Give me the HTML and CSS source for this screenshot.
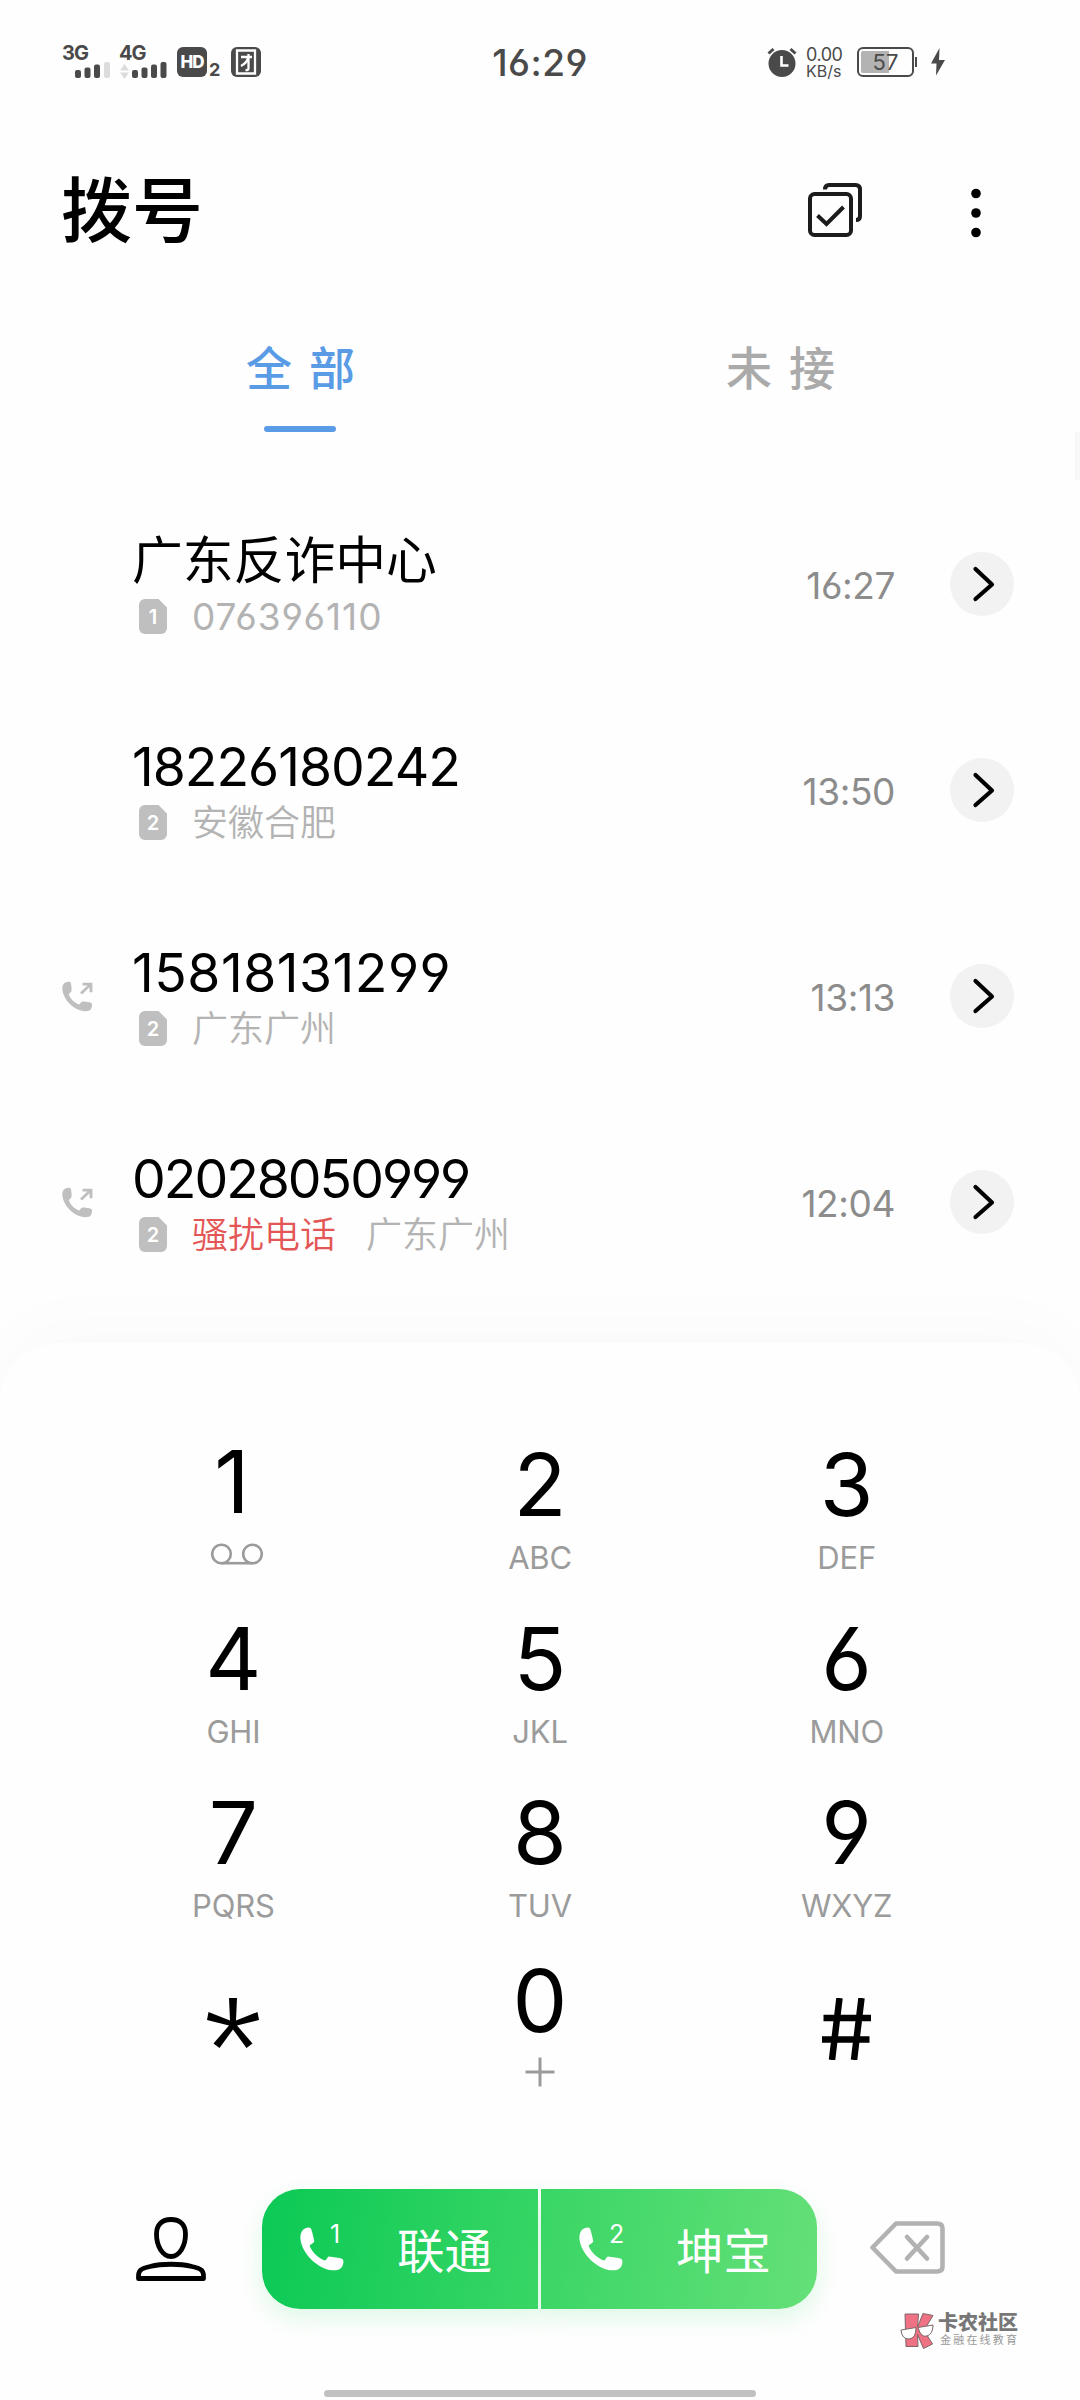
FILE: index.html
```html
<!DOCTYPE html>
<html lang="zh-CN">
<head>
    <meta charset="UTF-8">
    <meta name="viewport" content="width=device-width, initial-scale=1.0">
    <title>拨号</title>
    <link rel="stylesheet" href="styles.css">
</head>
<body>
    <!-- shared icons -->
    <svg class="defs" width="0" height="0">
        <symbol id="sim" viewBox="0 0 28 35">
            <path d="M6 0h13.500L28 8.500V29a6 6 0 0 1-6 6H6a6 6 0 0 1-6-6V6a6 6 0 0 1 6-6z" fill="#bfbfbf"/>
        </symbol>
        <symbol id="arrow" viewBox="0 0 64 64">
            <path d="M25.500 17L42 32.500 25.500 47" fill="none" stroke="#000" stroke-width="4.200" stroke-linecap="round" stroke-linejoin="round"/>
        </symbol>
        <symbol id="handset" viewBox="0 0 44 44">
            <path d="M5 1.500C7.500.300 10 .300 10.800 1.200C11.800 3 13.800 11 14.300 14.300C14 16 11 17 9.600 18.600C11 24 18 31.500 25 33.600C27 33 27 30 29 29.600C33 30 39 30.800 42.500 32C44 33.500 43.500 37 42 40C40 43 36 43.600 32 43.300C18 42 2.500 27 .600 13C0 8 1 3.500 5 1.500z" fill="currentColor"/>
        </symbol>
        <symbol id="outgoing" viewBox="0 0 31 31">
            <path d="M3.500 1.500C5.500.500 8.200.500 8.700 1.500C9.300 4 9.800 7 9.600 9.500C9.300 11.500 7.300 12 6.800 13.200C8.200 17.500 12.500 21.800 17 23.600C18.500 23.300 18.500 21.200 20.300 20.600C23.500 20.600 27 21.200 29.500 22C30.600 23 30 26 28.900 28.300C27 30.500 24 30.500 21 30C11 28.500 1.500 18.500.400 9C0 5.500.600 3 3.500 1.500z" fill="#bfbfbf"/>
            <path d="M19 12.500L28.500 3.500M20.500 3.200h8.500v8" fill="none" stroke="#bfbfbf" stroke-width="2.800"/>
        </symbol>
    </svg>

    <div class="phone">
        <header class="status-bar">
            <div class="status-left">
                <div class="network">
                    <span class="network-type">3G</span>
                    <svg class="bars" width="50" height="18" viewBox="0 0 50 18">
                        <g fill="#4a4a4a">
                            <rect x="13" y="9" width="6" height="8" rx="2"/>
                            <rect x="22.500" y="6.500" width="6" height="10.500" rx="2"/>
                            <rect x="32" y="3.500" width="6" height="13.500" rx="2"/>
                        </g>
                        <rect x="42" y="1" width="6" height="16" rx="2" fill="#dcdcdc"/>
                    </svg>
                </div>
                <div class="network">
                    <span class="network-type">4G</span>
                    <svg class="bars" width="50" height="18" viewBox="0 0 50 18">
                        <path d="M1 9.500L5.500 3l4.500 6.500zM1 11.500h9L5.500 18z" fill="#dcdcdc"/>
                        <g fill="#4a4a4a">
                            <rect x="13" y="9" width="6" height="8" rx="2"/>
                            <rect x="22.500" y="6.500" width="6" height="10.500" rx="2"/>
                            <rect x="32" y="3.500" width="6" height="13.500" rx="2"/>
                            <rect x="41.500" y="1" width="6" height="16" rx="2"/>
                        </g>
                    </svg>
                </div>
                <div class="hd"><span class="hd-box">HD</span><span class="hd-sim">2</span></div>
                <svg class="tuan" width="30" height="30" viewBox="0 0 30 30">
                    <rect width="30" height="30" rx="6" fill="#4a4a4a"/>
                    <path d="M6 3.500h18v23H6zM10 10h11M17.500 7v14.500q0 2-3 1.500M17 11.500q-2 5-7 7.500" fill="none" stroke="#fff" stroke-width="2.300"/>
                </svg>
            </div>
            <div class="clock">16:29</div>
            <div class="status-right">
                <svg class="alarm" width="30" height="30" viewBox="0 0 30 30">
                    <circle cx="15" cy="16.500" r="13.500" fill="#4a4a4a"/>
                    <path d="M1.500 6.500l5-4.500M28.500 6.500l-5-4.500" stroke="#4a4a4a" stroke-width="3"/>
                    <path d="M14.500 9v9.500h7" fill="none" stroke="#fff" stroke-width="2.600"/>
                </svg>
                <div class="speed"><span>0.00</span><span class="unit">KB/s</span></div>
                <div class="battery"><span class="battery-box"><span class="battery-level" style="width: 57%"></span><span class="battery-text">57</span></span><span class="battery-tip"></span></div>
                <svg class="bolt" width="14" height="28" viewBox="0 0 14 28">
                    <path d="M8.500 0L0 15.500h5.500L5 27.500 14 12H8z" fill="#4a4a4a"/>
                </svg>
            </div>
        </header>

        <div class="title-bar">
            <h1>拨号</h1>
            <div class="title-actions">
                <svg width="54" height="54" viewBox="0 0 54 54" fill="none" stroke="#1c1c1c" stroke-width="4">
                    <rect x="2" y="11" width="41" height="41" rx="4.500"/>
                    <path d="M17 6.500Q17 2 21 2H47.500Q52 2 52 6.500V33Q52 37 48 37"/>
                    <path d="M9.500 23.500L18.500 32 35.500 15" transform="translate(0 9)"/>
                </svg>
                <svg class="more" width="10" height="50" viewBox="0 0 10 50">
                    <circle cx="5" cy="5.500" r="4.800"/>
                    <circle cx="5" cy="25" r="4.800"/>
                    <circle cx="5" cy="44.500" r="4.800"/>
                </svg>
            </div>
        </div>

        <nav class="tabs">
            <div class="tab active">全部</div>
            <div class="tab">未接</div>
        </nav>
        <div class="scroll-thumb"></div>

        <main class="calls">
            <div class="call">
                <div class="call-type"></div>
                <div class="call-info">
                    <div class="call-name cjk">广东反诈中心</div>
                    <div class="call-detail">
                        <span class="sim"><svg width="28" height="35"><use href="#sim"/></svg><b>1</b></span>
                        <span class="number">076396110</span>
                    </div>
                </div>
                <div class="call-time">16:27</div>
                <div class="call-more"><svg width="64" height="64"><use href="#arrow"/></svg></div>
            </div>
            <div class="call">
                <div class="call-type"></div>
                <div class="call-info">
                    <div class="call-name loose">18226180242</div>
                    <div class="call-detail">
                        <span class="sim"><svg width="28" height="35"><use href="#sim"/></svg><b>2</b></span>
                        <span>安徽合肥</span>
                    </div>
                </div>
                <div class="call-time">13:50</div>
                <div class="call-more"><svg width="64" height="64"><use href="#arrow"/></svg></div>
            </div>
            <div class="call">
                <div class="call-type"><svg width="31" height="31"><use href="#outgoing"/></svg></div>
                <div class="call-info">
                    <div class="call-name looser">15818131299</div>
                    <div class="call-detail">
                        <span class="sim"><svg width="28" height="35"><use href="#sim"/></svg><b>2</b></span>
                        <span>广东广州</span>
                    </div>
                </div>
                <div class="call-time">13:13</div>
                <div class="call-more"><svg width="64" height="64"><use href="#arrow"/></svg></div>
            </div>
            <div class="call">
                <div class="call-type"><svg width="31" height="31"><use href="#outgoing"/></svg></div>
                <div class="call-info">
                    <div class="call-name">02028050999</div>
                    <div class="call-detail">
                        <span class="sim"><svg width="28" height="35"><use href="#sim"/></svg><b>2</b></span>
                        <span class="spam">骚扰电话</span>
                        <span>广东广州</span>
                    </div>
                </div>
                <div class="call-time">12:04</div>
                <div class="call-more"><svg width="64" height="64"><use href="#arrow"/></svg></div>
            </div>
        </main>

        <section class="dialer">
            <div class="keypad">
                <div class="key key-one">
                    <span class="digit">1</span>
                    <svg class="voicemail" width="52" height="22" viewBox="0 0 52 22" fill="none" stroke="#9b9b9b" stroke-width="2.600">
                        <circle cx="10.500" cy="11" r="9.300"/>
                        <circle cx="41.500" cy="11" r="9.300"/>
                        <path d="M10.500 20.200h31"/>
                    </svg>
                </div>
                <div class="key"><span class="digit">2</span><span class="letters">ABC</span></div>
                <div class="key"><span class="digit">3</span><span class="letters">DEF</span></div>
                <div class="key"><span class="digit">4</span><span class="letters">GHI</span></div>
                <div class="key"><span class="digit">5</span><span class="letters">JKL</span></div>
                <div class="key"><span class="digit">6</span><span class="letters">MNO</span></div>
                <div class="key"><span class="digit">7</span><span class="letters">PQRS</span></div>
                <div class="key"><span class="digit">8</span><span class="letters">TUV</span></div>
                <div class="key"><span class="digit">9</span><span class="letters">WXYZ</span></div>
                <div class="key key-symbol">
                    <svg width="52" height="50" viewBox="0 0 52 50">
                        <path d="M22 0h8l-1 22.500L50.500 14l1.500 8-22 5.500 15.500 18L39.500 50 26 31.500 12.500 50l-6-4.500 15.500-18L0 22l1.500-8L23 22.500z"/>
                    </svg>
                </div>
                <div class="key key-zero">
                    <span class="digit">0</span>
                    <svg class="plus" width="30" height="30" viewBox="0 0 30 30"><path d="M15 0.500v29M0.500 15h29" stroke="#9b9b9b" stroke-width="3"/></svg>
                </div>
                <div class="key key-symbol">
                    <svg width="50" height="62" viewBox="0 0 50 62">
                        <path d="M17.500 0L10 62M39.500 0L32 62M1.500 20H49M0 41.500H47.500" fill="none" stroke="#000" stroke-width="6.500"/>
                    </svg>
                </div>
            </div>

            <div class="actions">
                <svg class="contact" width="72" height="66" viewBox="0 0 72 66" fill="none" stroke="#000" stroke-width="4.800" stroke-linejoin="round">
                    <path d="M36 3.500C45 3.500 50.500 8.500 50.500 18C50.500 30 44.500 40.500 36 40.500S21.500 30 21.500 18C21.500 8.500 27 3.500 36 3.500z"/>
                    <path d="M3.500 62.500C3 55 5 52.500 15 50.500C27 47.500 45 47.500 57 50.500C67 52.500 69 55 68.500 62.500z"/>
                </svg>
                <div class="call-buttons">
                    <div class="call-btn first">
                        <svg width="44" height="44"><use href="#handset"/></svg>
                        <sup>1</sup>
                        <span>联通</span>
                    </div>
                    <div class="call-btn second">
                        <svg width="44" height="44"><use href="#handset"/></svg>
                        <sup>2</sup>
                        <span>坤宝</span>
                    </div>
                </div>
                <svg class="backspace" width="75" height="53" viewBox="0 0 75 53" fill="none" stroke="#b2b2b2" stroke-width="4.600" stroke-linejoin="round" stroke-linecap="round">
                    <path d="M26 2.500H67Q72.500 2.500 72.500 7.500V45.500Q72.500 50.500 67 50.500H26L2.500 26.500z"/>
                    <path d="M37 16L57 37.500M57 16L37 37.500"/>
                </svg>
            </div>

            <div class="brand">
                <svg width="36" height="36" viewBox="0 0 36 36" stroke="#7c6668" stroke-width="1">
                    <path d="M5 1h13.500l-1 13L23 0.500l10 2-9 15L32.500 31l-9 4.500-6-14 0.500 12H6z" fill="#ee7284"/>
                    <path d="M1 17l15-2.500q0 11-7 11.500t-8-9zM18 14.500l15-2.500q0 9-6 11t-9-8.500z" fill="#fff"/>
                </svg>
                <div class="brand-text">
                    <strong>卡农社区</strong>
                    <small>金融在线教育</small>
                </div>
            </div>
            <div class="home-handle"></div>
        </section>
    </div>
</body>
</html>
```

FILE: styles.css
```css
* {
    box-sizing: border-box;
}

body {
    margin: 0;
    background: #fefefe;
    color: #000;
    font-family: Inter, "Noto Sans CJK SC", sans-serif;
    /* straight-tailed 6 and 9 */
    font-feature-settings: "cv03", "cv04";
}

svg {
    display: block;
    flex: none;
}

.defs {
    position: absolute;
}

.phone {
    width: 1080px;
    height: 2400px;
    overflow: hidden;
    display: flex;
    flex-direction: column;
}

/* status bar */
.status-bar {
    height: 124px;
    padding: 0 135px 0 62px;
    display: grid;
    grid-template-columns: 384px 188px 311px;
    align-items: center;
    color: #4a4a4a;
}

.status-left,
.status-right {
    display: flex;
    align-items: center;
}

.network {
    width: 57px;
    height: 34px;
    margin-top: -1px;
}

.network-type {
    display: block;
    height: 16px;
    font-size: 20px;
    line-height: 16px;
    font-weight: 700;
    letter-spacing: -1px;
}

.hd {
    display: flex;
    align-items: flex-end;
    width: 54px;
    margin-left: 1px;
}

.hd-box {
    width: 30px;
    height: 30px;
    border-radius: 6px;
    background: #4a4a4a;
    color: #fff;
    font-size: 17px;
    line-height: 30px;
    font-weight: 800;
    letter-spacing: -1px;
    text-align: center;
}

.hd-sim {
    margin-left: 2px;
    font-size: 18px;
    line-height: 14px;
    font-weight: 700;
}

.clock {
    font-size: 37px;
    font-weight: 550;
    letter-spacing: 0.5px;
    text-align: center;
}

.status-right {
    justify-content: flex-end;
}

.speed {
    display: flex;
    flex-direction: column;
    width: 38px;
    margin: 0 13px 0 9px;
    font-size: 18px;
    line-height: 17px;
    white-space: nowrap;
    letter-spacing: -0.5px;
}

.speed .unit {
    font-size: 16px;
    line-height: 16px;
    letter-spacing: 0;
}

.battery {
    display: flex;
    align-items: center;
    margin-right: 14px;
}

.battery-box {
    position: relative;
    width: 57px;
    height: 30px;
    padding: 2px;
    border: 2px solid #4a4a4a;
    border-radius: 6px;
}

.battery-level {
    display: block;
    height: 100%;
    background: #b3b3b3;
    border-radius: 2px 0 0 2px;
}

.battery-text {
    position: absolute;
    inset: 0;
    font-size: 22px;
    line-height: 26px;
    text-align: center;
}

.battery-tip {
    width: 2px;
    height: 10px;
    margin-left: 1px;
    background: #4a4a4a;
}

/* title */
.title-bar {
    height: 172px;
    padding: 0 99px 0 61px;
    display: flex;
    align-items: center;
    justify-content: space-between;
}

h1 {
    margin: 0;
    font-size: 71px;
    line-height: 100px;
    font-weight: 500;
}

.title-actions {
    display: flex;
    align-items: center;
    gap: 109px;
}

.more {
    margin-top: 6px;
}

/* tabs */
.tabs {
    height: 136px;
    padding: 0 60px;
    display: grid;
    grid-template-columns: 1fr 1fr;
}

.tab {
    display: flex;
    flex-direction: column;
    align-items: center;
    padding-top: 40px;
    font-size: 46px;
    line-height: 64px;
    font-weight: 500;
    letter-spacing: 17px;
    text-indent: 18px;
    color: #aaa;
}

.tab.active {
    color: #5a9be6;
}

.tab.active::after {
    content: "";
    width: 72px;
    height: 6px;
    margin-top: 26px;
    border-radius: 3px;
    background: #5a9be6;
}

.scroll-thumb {
    width: 5px;
    height: 48px;
    margin-left: auto;
    background: #f8f8f8;
}

/* call log */
.calls {
    height: 863px;
    padding-top: 1px;
}

.call {
    height: 206px;
    padding: 0 66px 0 62px;
    display: flex;
    align-items: center;
}

.call-type {
    width: 70px;
}

.call-info {
    flex: 1;
    padding-top: 3px;
}

.call-name {
    height: 62px;
    font-size: 53.5px;
    line-height: 62px;
    font-weight: 380;
    letter-spacing: -2px;
}

.call-name.loose {
    letter-spacing: -1px;
}

.call-name.looser {
    letter-spacing: 0.5px;
}

.call-name.cjk {
    font-size: 50.8px;
    font-weight: 400;
    letter-spacing: 0;
}

.call-detail {
    display: flex;
    align-items: center;
    height: 50px;
    padding-left: 7px;
    font-size: 36px;
    line-height: 50px;
    color: #b3b3b3;
    font-weight: 350;
}

.call-detail .number {
    font-size: 37px;
    font-weight: 380;
    letter-spacing: 1px;
}

.sim {
    position: relative;
    margin-right: 25px;
}

.sim b {
    position: absolute;
    inset: 0;
    color: #fff;
    font-size: 20px;
    line-height: 37px;
    font-weight: 600;
    text-align: center;
}

.spam {
    margin-right: 30px;
    color: #e45656;
}

.call-time {
    margin-right: 55px;
    padding-top: 3px;
    font-size: 37px;
    font-weight: 380;
    letter-spacing: -0.4px;
    color: #8c8c8c;
}

.call-more {
    width: 64px;
    height: 64px;
    border-radius: 50%;
    background: #f2f2f2;
}

/* dial pad */
.dialer {
    height: 1057px;
    padding-top: 82px;
    border-radius: 60px 60px 0 0;
    background: #fefefe;
    box-shadow: 0 -10px 80px rgba(0, 0, 0, 0.025);
}

.keypad {
    height: 764px;
    padding: 0 80px;
    display: grid;
    grid-template-columns: repeat(3, 1fr);
    grid-template-rows: 174px 174px 174px 242px;
}

.key {
    display: flex;
    flex-direction: column;
    align-items: center;
}

.digit {
    height: 120px;
    font-size: 87px;
    line-height: 120px;
    font-weight: 400;
}

.letters {
    height: 26px;
    font-size: 31px;
    line-height: 25px;
    color: #9b9b9b;
    font-weight: 380;
    letter-spacing: -0.2px;
}

.key-one .digit {
    margin: -3px 3px 0 0;
}

.voicemail {
    margin: 1px 0 0 8px;
}

.key-zero .digit {
    margin-top: -6px;
}

.plus {
    margin-top: -4px;
}

.key-symbol {
    padding-top: 51px;
}

/* bottom actions */
.actions {
    height: 120px;
    padding: 0 135px;
    display: flex;
    align-items: center;
    justify-content: space-between;
}

.call-buttons {
    width: 555px;
    height: 120px;
    margin-left: 2px;
    display: flex;
    gap: 3px;
}

.call-btn {
    flex: 1;
    display: flex;
    align-items: center;
    color: #fff;
    font-size: 47.5px;
    box-shadow: 0 10px 24px rgba(60, 215, 110, 0.16);
}

.call-btn.first {
    padding-left: 38px;
    border-radius: 38px 0 0 38px;
    background: linear-gradient(100deg, #0bc955, #39d665);
}

.call-btn.second {
    padding-left: 38px;
    border-radius: 0 38px 38px 0;
    background: linear-gradient(100deg, #39d665, #65e078);
}

.call-btn sup {
    width: 14px;
    margin: -30px 53px 0 -14px;
    font-size: 25px;
    line-height: 30px;
}

.call-btn span {
    margin-top: -2px;
}

.backspace {
    margin-top: -4px;
}

.brand {
    display: flex;
    align-items: flex-start;
    gap: 2px;
    height: 81px;
    padding: 4px 0 0 900px;
}

.brand-text {
    display: flex;
    flex-direction: column;
}

.brand-text strong {
    font-size: 20px;
    line-height: 20px;
    font-weight: 900;
    color: #777;
}

.brand-text small {
    margin-top: 1px;
    padding-left: 2px;
    font-size: 11px;
    line-height: 13px;
    letter-spacing: 2.2px;
    color: #999;
}

.home-handle {
    width: 432px;
    height: 7px;
    margin: 0 auto;
    border-radius: 4px;
    background: #c1c1c1;
}
```
